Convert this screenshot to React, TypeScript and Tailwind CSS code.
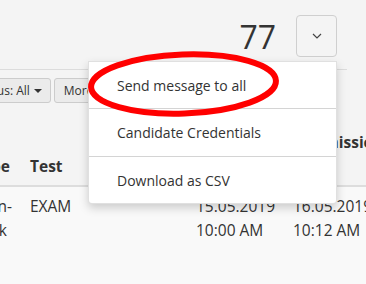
import React from "react";

export default function App() {
  return (
    <div className="relative w-[366px] h-[284px] overflow-hidden bg-[#f4f4f4] text-[#333] font-['Open_Sans',sans-serif]">
      {/* top bar */}
      <div className="h-[70px] mr-[19px] border-b border-[#dcdcdc] flex justify-end items-start pr-[10px]">
        <span className="mt-[21px] mr-[20px] text-[32px] leading-[32px] text-[#333]">77</span>
        <button className="mt-[15px] w-[41px] h-[42px] border border-[#cfcfcf] rounded-[4px] bg-[#f4f4f4] flex items-center justify-center">
          <svg width="10" height="6" viewBox="0 0 10 6" fill="none">
            <path d="M1 1l4 4 4-4" stroke="#444" strokeWidth="1.2" />
          </svg>
        </button>
      </div>

      {/* filter row */}
      <div className="mt-[8px] h-[25px] flex justify-start gap-[3px] ml-[-34px] text-[12px]">
        <button className="h-[25px] px-[8px] flex items-center gap-[4px] bg-[#ebebeb] border border-[#cccccc] rounded-[3px] text-[#333] whitespace-nowrap">
          <span>Status: All</span>
          <span className="w-0 h-0 border-l-[4px] border-r-[4px] border-t-[4px] border-l-transparent border-r-transparent border-t-[#333]" />
        </button>
        <button className="h-[25px] px-[9px] flex items-center gap-[4px] bg-[#ebebeb] border border-[#cccccc] rounded-[3px] text-[#333] whitespace-nowrap">
          <span>More</span>
          <span className="w-0 h-0 border-l-[4px] border-r-[4px] border-t-[4px] border-l-transparent border-r-transparent border-t-[#333]" />
        </button>
      </div>

      {/* table header */}
      <div className="ml-[-60px] h-[84px] grid grid-cols-[90px_166px_97px_140px] items-end border-b-2 border-[#dddddd] pb-[7px] text-[15.5px] leading-[24px] font-bold">
        <div className="text-right pr-[20px]">Type</div>
        <div>Test</div>
        <div>Start<br />date</div>
        <div className="whitespace-nowrap pl-[2px]">Submission<br />date</div>
      </div>

      {/* table body */}
      <div className="bg-[#f9f9f9] h-[100px]">
        <div className="ml-[-60px] grid grid-cols-[90px_166px_97px_140px] pt-[7px] text-[15.5px] leading-[24px]">
          <div className="flex flex-col items-end pr-[18px] whitespace-nowrap">
            <span>Open-</span>
            <span className="pr-[5px]">book</span>
          </div>
          <div>EXAM</div>
          <div className="whitespace-nowrap">15.05.2019<br />10:00 AM</div>
          <div className="whitespace-nowrap">16.05.2019<br />10:12 AM</div>
        </div>
      </div>

      {/* dropdown menu */}
      <div className="absolute left-[88px] top-[61px] w-[249px] bg-white border border-[rgba(0,0,0,0.12)] rounded-b-[4px] shadow-[0_4px_10px_rgba(0,0,0,0.18)] text-[14px] text-[#333]">
        <div className="h-[46px] flex items-center pl-[28px]">Send message to all</div>
        <div className="h-px bg-[#d4d4d4]" />
        <div className="h-[47px] flex items-center pl-[28px]">Candidate Credentials</div>
        <div className="h-px bg-[#d4d4d4]" />
        <div className="h-[46px] flex items-center pl-[28px]">Download as CSV</div>
      </div>

      {/* red annotation ellipse */}
      <svg className="absolute left-[80px] top-[44px]" width="210" height="82" viewBox="0 0 210 82" fill="none">
        <ellipse cx="103.5" cy="40" rx="92.5" ry="29.5" stroke="#ff0000" strokeWidth="6" transform="rotate(-2 103.5 40)" />
      </svg>
    </div>
  );
}
